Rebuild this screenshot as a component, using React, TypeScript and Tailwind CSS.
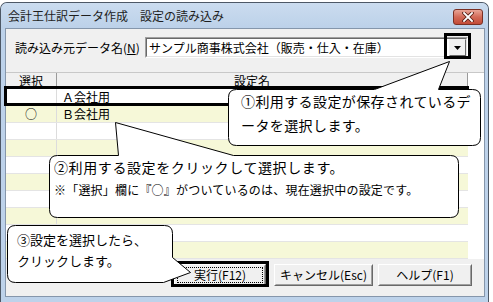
import React from "react";

const rows = ["Ａ会社用", "Ｂ会社用", "", "", "", "", "", "", "", ""];

function ClassicButton({ w, children, focused }: { w: string; children: React.ReactNode; focused?: boolean }) {
  return (
    <div className={`${w} h-[22px] border border-t-white border-l-white border-b-[#696969] border-r-[#696969] bg-[#f0f0f0]`}>
      <div className="w-full h-full border border-t-[#f0f0f0] border-l-[#f0f0f0] border-b-[#a0a0a0] border-r-[#a0a0a0] p-[1px]">
        <div
          className={`w-full h-full flex items-center justify-center text-[12px] leading-[14px] ${
            focused ? "border border-dotted border-black" : "border border-transparent"
          }`}
        >
          {children}
        </div>
      </div>
    </div>
  );
}

export default function App() {
  return (
    <div className="w-[493px] h-[302px] bg-white relative overflow-hidden font-['Noto_Sans_CJK_JP',sans-serif] text-black">
      {/* Window */}
      <div className="mt-[2px] w-[489px] h-[300px] rounded-t-[7px] border-t border-x border-[#4d5866] bg-[#bdd2ea] flex flex-col">
        {/* Title bar */}
        <div className="h-[25px] shrink-0 flex items-center justify-between pl-[7px] pr-[5px] rounded-t-[6px] bg-gradient-to-b from-[#cbdcef] to-[#bcd1e9]">
          <span className="text-[12px] leading-[14px] mt-[1px] text-[#1e1e1e]">会計王仕訳データ作成　設定の読み込み</span>
          <div className="mt-[3px] w-[30px] h-[16px] rounded-[3px] border border-[#7a3024] bg-gradient-to-b from-[#e8a597] via-[#d36a58] to-[#c24a36] flex items-center justify-center">
            <svg width="12" height="10" viewBox="0 0 12 10">
              <path d="M2 1 L10 9 M10 1 L2 9" stroke="#5a2016" strokeWidth="3.6" strokeLinecap="square" />
              <path d="M2 1 L10 9 M10 1 L2 9" stroke="#ffffff" strokeWidth="1.8" strokeLinecap="square" />
            </svg>
          </div>
        </div>

        {/* Content */}
        <div className="flex-1 ml-[4px] mr-[3px] mb-[5px] border border-[#8596ab] bg-[#f0f0f0] flex flex-col">
          {/* Combo row */}
          <div className="flex items-center pt-[8px] pl-[9px]">
            <span className="w-[130px] text-[12px] leading-[14px]">
              読み込み元データ名(<span className="underline">N</span>)
            </span>
            <div className="w-[323px] h-[21px] border border-t-[#a0a0a0] border-l-[#a0a0a0] border-b-white border-r-white">
              <div className="w-full h-full border border-t-[#696969] border-l-[#696969] border-b-[#e3e3e3] border-r-[#e3e3e3] bg-white flex items-center justify-between">
                <span className="pl-[2px] text-[12px] leading-[14px]">サンプル商事株式会社（販売・仕入・在庫）</span>
                <div className="w-[17px] h-[17px] border border-t-[#f0f0f0] border-l-[#f0f0f0] border-b-[#696969] border-r-[#696969] bg-[#f0f0f0] flex items-center justify-center">
                  <svg width="7" height="4" viewBox="0 0 7 4">
                    <path d="M0 0 H7 L3.5 4 Z" fill="#000" />
                  </svg>
                </div>
              </div>
            </div>
          </div>

          {/* Grid */}
          <div className="mt-[14px] w-full h-[187px] bg-white border-t border-[#c8c8c8]">
            <div className="w-[462px] h-[16px] flex bg-[#f0f0f0] border-b border-r border-[#9a9a9a] text-[12px] leading-[14px]">
              <div className="w-[51px] border-r border-[#9a9a9a] flex items-center justify-center">選択</div>
              <div className="flex-1 flex items-center justify-center pr-[20px]">設定名</div>
            </div>
            {rows.map((r, i) => (
              <div
                key={i}
                className={`w-[462px] h-[17px] flex border-b border-[#e4e4e4] text-[12px] leading-[14px] ${
                  i % 2 === 1 ? "bg-[#f6f8d8]" : "bg-white"
                }`}
              >
                <div className="w-[51px] border-r border-[#dcdcdc] flex items-center justify-center">
                  {i === 1 ? "○" : ""}
                </div>
                <div className="flex-1 flex items-center pl-[5px]">{r}</div>
              </div>
            ))}
          </div>

          {/* Buttons */}
          <div className="mt-[5px] flex pl-[168px]">
            <ClassicButton w="w-[92px]" focused>
              実行(F12)
            </ClassicButton>
            <div className="ml-[8px]">
              <ClassicButton w="w-[99px]">キャンセル(Esc)</ClassicButton>
            </div>
            <div className="ml-[5px]">
              <ClassicButton w="w-[94px]">ヘルプ(F1)</ClassicButton>
            </div>
          </div>
        </div>
      </div>

      {/* Highlight frames */}
      <div className="absolute left-[444px] top-[33px] w-[27px] h-[26px] border-[3px] border-black" />
      <div className="absolute left-[4px] top-[86px] w-[465px] h-[20px] border-[3px] border-black" />
      <div className="absolute left-[171px] top-[261px] w-[98px] h-[26px] border-[3px] border-black" />

      {/* Callout shapes */}
      <svg className="absolute left-0 top-0" width="493" height="302" viewBox="0 0 493 302">
        <path
          d="M236.5 89.5 L374.5 89.5 L449.5 61.5 L438.5 89.5 L472.5 89.5 Q480.5 89.5 480.5 97.5 L480.5 137.5 Q480.5 145.5 472.5 145.5 L236.5 145.5 Q228.5 145.5 228.5 137.5 L228.5 97.5 Q228.5 89.5 236.5 89.5 Z"
          fill="#fff"
          stroke="#000"
          strokeWidth="1"
        />
        <path
          d="M57.5 155.5 L118.5 155.5 L115.5 122.5 L233.5 155.5 L450.5 155.5 Q458.5 155.5 458.5 163.5 L458.5 209.5 Q458.5 217.5 450.5 217.5 L57.5 217.5 Q49.5 217.5 49.5 209.5 L49.5 163.5 Q49.5 155.5 57.5 155.5 Z"
          fill="#fff"
          stroke="#000"
          strokeWidth="1"
        />
        <path
          d="M15.5 225.5 L164.5 225.5 Q172.5 225.5 172.5 233.5 L172.5 257.5 L190.5 272.5 L163.5 282.5 L15.5 282.5 Q7.5 282.5 7.5 274.5 L7.5 233.5 Q7.5 225.5 15.5 225.5 Z"
          fill="#fff"
          stroke="#000"
          strokeWidth="1"
        />
      </svg>

      {/* Callout texts */}
      <div className="absolute left-[228px] top-[89px] w-[253px] pl-[13px] text-[14px] leading-[24px] tracking-[0.4px] whitespace-nowrap">
        <div>①利用する設定が保存されているデ</div>
        <div>ータを選択します。</div>
      </div>
      <div className="absolute left-[49px] top-[155px] w-[410px] pl-[5px] whitespace-nowrap">
        <div className="text-[14px] leading-[24px] tracking-[0.6px]">②利用する設定をクリックして選択します。</div>
        <div className="text-[12px] leading-[22px] tracking-[0.2px]">※「選択」欄に『○』がついているのは、現在選択中の設定です。</div>
      </div>
      <div className="absolute left-[7px] top-[225px] w-[166px] pl-[10px] pt-[4px] text-[13px] leading-[21px] whitespace-nowrap">
        <div>③設定を選択したら、</div>
        <div>クリックします。</div>
      </div>
    </div>
  );
}
